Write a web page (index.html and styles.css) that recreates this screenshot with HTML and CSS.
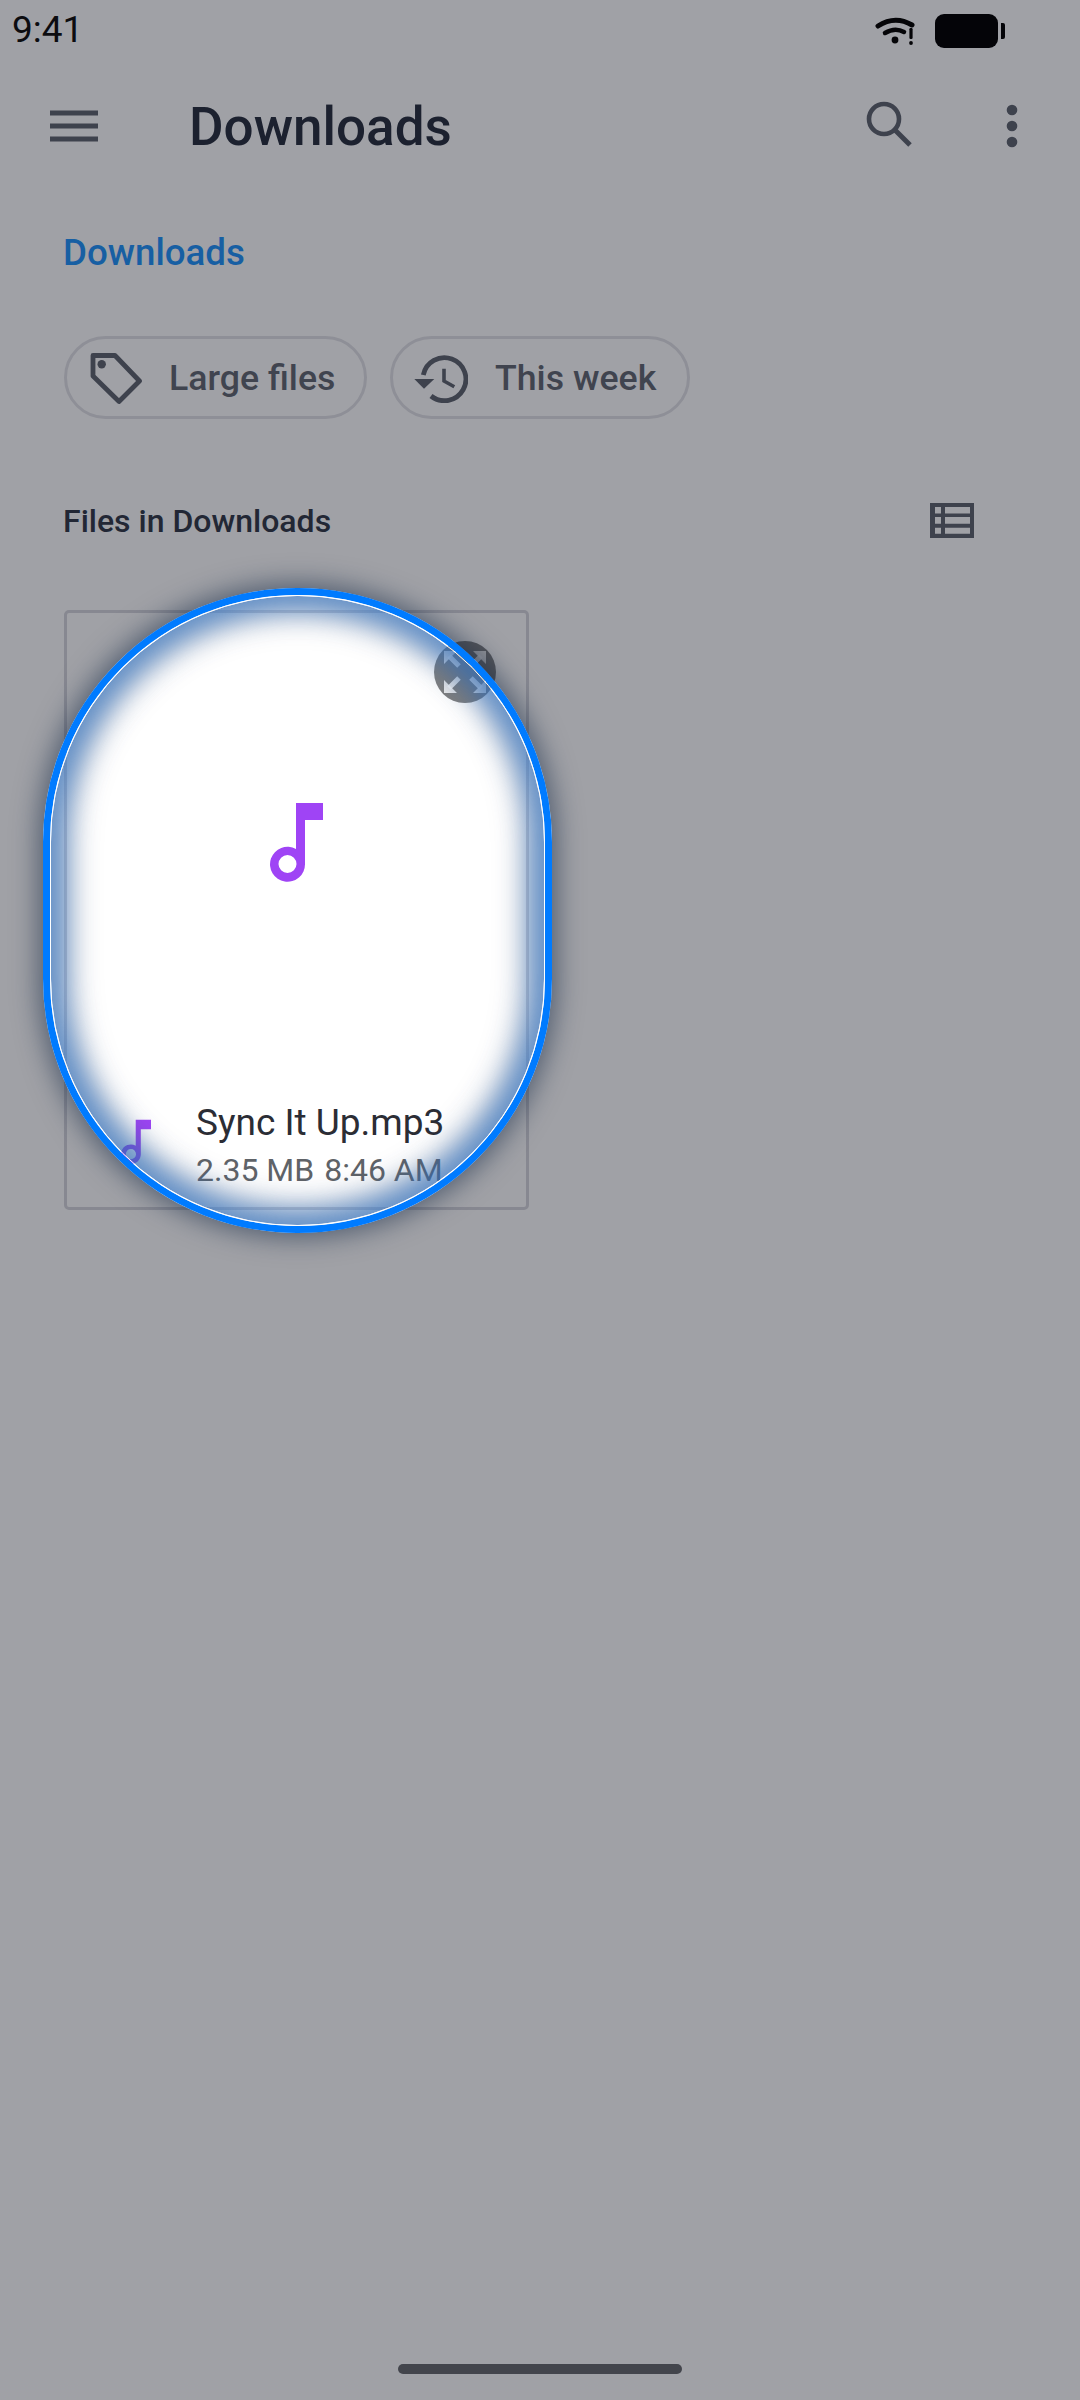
FILE: index.html
```html
<!DOCTYPE html>
<html lang="en">
<head>
<meta charset="utf-8">
<title>Downloads</title>
<link rel="stylesheet" href="styles.css">
</head>
<body>
<div class="page">
  <div class="status">
    <span class="time">9:41</span>
    <div class="status-icons">
      <svg class="wifi" viewBox="0 0 40 30"><path d="M3 11 Q20 0 37 10" fill="none" stroke="#050508" stroke-width="5" stroke-linecap="round"/><path d="M10 18 Q20 12 29 17" fill="none" stroke="#050508" stroke-width="4.5" stroke-linecap="round"/><circle cx="20" cy="25" r="3.4" fill="#050508"/><rect x="34.400" y="13" width="3.200" height="11" rx="1.200" fill="#050508"/><circle cx="36" cy="28" r="1.900" fill="#050508"/></svg>
      <div class="battery"><div class="battery-body"></div><div class="battery-tip"></div></div>
    </div>
  </div>
  <header class="appbar">
    <svg class="menu" viewBox="0 0 48 32"><path d="M0 3h48M0 16h48M0 29h48" stroke="#5c616c" stroke-width="5"/></svg>
    <h1 class="title">Downloads</h1>
    <svg class="search" viewBox="0 0 50 50"><circle cx="20" cy="20" r="15" fill="none" stroke="#5c616c" stroke-width="4.6"/><path d="M31 31 L46 46" stroke="#5c616c" stroke-width="5"/></svg>
    <svg class="more" viewBox="0 0 12 44"><circle cx="6" cy="6" r="5.3" fill="#5c616c"/><circle cx="6" cy="22" r="5.3" fill="#5c616c"/><circle cx="6" cy="38" r="5.3" fill="#5c616c"/></svg>
  </header>
  <div class="crumb">Downloads</div>
  <div class="chips">
    <div class="chip chip-large">
      <svg class="tag" viewBox="0 0 54 54"><path d="M5 4.500 H27 L51.500 30 L31 50.500 L5 25 Z" fill="none" stroke="#5c616c" stroke-width="4.800" stroke-linejoin="round"/><circle cx="13.700" cy="13.300" r="4.200" fill="#5c616c"/></svg>
      <span>Large files</span>
    </div>
    <div class="chip chip-week">
      <svg class="history" viewBox="0 0 56 50"><path d="M11.300 22 A21.500 21.500 0 1 1 19 43" fill="none" stroke="#5c616c" stroke-width="4.800"/><path d="M2.300 26 H22.300 L12 35.700 Z" fill="#5c616c"/><path d="M32 15.700 V28 L42.300 33.700" fill="none" stroke="#5c616c" stroke-width="3.600"/></svg>
      <span>This week</span>
    </div>
  </div>
  <div class="section">
    <span class="section-title">Files in Downloads</span>
    <svg class="list" viewBox="0 0 44 35"><path fill="#5c616c" fill-rule="evenodd" d="M0 0H44V35H0Z M5 4V10.500H11V4Z M15 4V10.500H40V4Z M5 14V20.700H11V14Z M15 14V20.700H40V14Z M5 24.700V30.700H11V24.700Z M15 24.700V30.700H40V24.700Z"/></svg>
  </div>
  <article class="card">
    <div class="preview">
      <svg class="note-big" viewBox="0 0 53 79"><path fill="#9f44f5" fill-rule="evenodd" d="M26 0H53V17H35V61A17.500 17.500 0 1 1 26 46Z M17.500 52A9 9 0 1 0 17.500 70A9 9 0 1 0 17.500 52Z"/></svg>
      <div class="expand"><svg class="expand-icon" viewBox="0 0 42 42"><path fill="#fff" fill-opacity=".85" d="M0 0H13L0 13Z M42 0V13L29 0Z M0 42V29L13 42Z M42 42H29L42 29Z"/><path stroke="#fff" stroke-opacity=".85" stroke-width="5" d="M5 5L15 15M37 5L27 15M5 37L15 27M37 37L27 27"/></svg></div>
    </div>
    <div class="info">
      <svg class="note-small" viewBox="0 0 53 79"><path fill="#9f44f5" fill-rule="evenodd" d="M26 0H53V17H35V61A17.500 17.500 0 1 1 26 46Z M17.500 52A9 9 0 1 0 17.500 70A9 9 0 1 0 17.500 52Z"/></svg>
      <div class="info-text">
        <div class="file-name">Sync It Up.mp3</div>
        <div class="file-meta"><span>2.35 MB</span><span>8:46 AM</span></div>
      </div>
    </div>
  </article>
  <div class="home-pill"></div>
  <div class="spotlight"><div class="spotlight-inner"></div></div>
</div>
</body>
</html>
```
FILE: styles.css
```css
html, body { margin: 0; padding: 0; overflow: hidden; }
.page {
  position: relative;
  width: 1080px;
  height: 2400px;
  overflow: hidden;
  background: #fff;
  font-family: Roboto, sans-serif;
  color: #1f2937;
}
.status { position: relative; z-index: 2; height: 60px; display: flex; align-items: center; justify-content: space-between; padding-left: 12px; }
.time { font-size: 37px; color: #0c0c10; line-height: 60px; }
.status-icons { display: flex; align-items: center; gap: 20px; margin-right: 75px; }
.wifi { width: 40px; height: 30px; display: block; }
.battery { display: flex; align-items: center; gap: 3px; margin-top: 2px; }
.battery-body { width: 63px; height: 34px; background: #040408; border-radius: 9px; }
.battery-tip { width: 4px; height: 16px; background: #040408; border-radius: 0 2px 2px 0; }
.appbar { height: 76px; margin-top: 28px; display: flex; align-items: center; padding-left: 50px; }
.menu { width: 48px; height: 32px; display: block; }
.title { margin: 0 0 0 91px; padding-top: 2px; font-size: 53px; font-weight: 500; line-height: 76px; color: #232a39; flex: 1; }
.search { width: 50px; height: 50px; display: block; margin-top: -4px; }
.more { width: 12px; height: 44px; display: block; margin: 0 62px 0 92px; }
.crumb { margin: 59px 0 0 63px; font-size: 36.700px; font-weight: 500; line-height: 60px; color: #1b92fa; }
.chips { display: flex; gap: 23px; margin: 53px 0 0 64px; }
.chip { height: 83px; box-sizing: border-box; border: 3px solid #e2e2e6; border-radius: 42px; display: flex; align-items: center; font-size: 35.700px; font-weight: 500; color: #60656f; }
.chip-large { width: 303px; padding-left: 21px; gap: 27px; }
.chip-week { width: 300px; padding-left: 19px; gap: 27px; }
.tag { width: 54px; height: 54px; display: block; }
.history { width: 56px; height: 50px; display: block; }
.section { display: flex; align-items: center; justify-content: space-between; margin: 76px 106px 0 63px; height: 50px; }
.section-title { padding-top: 2px; font-size: 32px; font-weight: 500; color: #2e3544; }
.list { width: 44px; height: 35px; display: block; }
.card { position: relative; width: 465px; height: 600px; box-sizing: border-box; margin: 65px 0 0 64px; border: 3px solid #d6d6dc; border-radius: 5px; display: flex; flex-direction: column; }
.preview { position: relative; flex: 1; display: flex; align-items: center; justify-content: center; }
.note-big { width: 53px; height: 79px; display: block; }
.expand { position: absolute; top: 28px; right: 30px; width: 62px; height: 62px; border-radius: 50%; background: rgba(0,0,0,.5); display: flex; align-items: center; justify-content: center; }
.expand-icon { width: 42px; height: 42px; display: block; }
.info { display: flex; align-items: flex-start; box-sizing: border-box; padding: 29px 0 0 54px; gap: 45px; height: 135px; }
.note-small { width: 30px; height: 46px; display: block; margin-top: 18px; }
.file-name { font-size: 37px; line-height: 44px; color: #2b2d35; white-space: nowrap; }
.file-meta { display: flex; gap: 10px; margin-top: 3px; font-size: 32px; line-height: 44px; color: #5f6368; white-space: nowrap; }
.home-pill { position: absolute; left: 398px; top: 2364px; width: 284px; height: 10px; border-radius: 5px; background: #64666a; }
.spotlight { position: absolute; left: 43px; top: 588px; width: 509px; height: 645px; box-sizing: border-box; border: 7px solid #007bff; border-radius: 254px; box-shadow: 0 0 26px 5px rgba(20,40,70,.55), 0 0 0 3000px rgba(17,20,33,.4); }
.spotlight-inner { width: 100%; height: 100%; box-sizing: border-box; border: 1.5px solid #fff; border-radius: 247px; box-shadow: inset 0 0 26px 15px rgba(45,110,190,.68), inset 0 0 30px 22px rgba(70,80,100,.25); }
```
